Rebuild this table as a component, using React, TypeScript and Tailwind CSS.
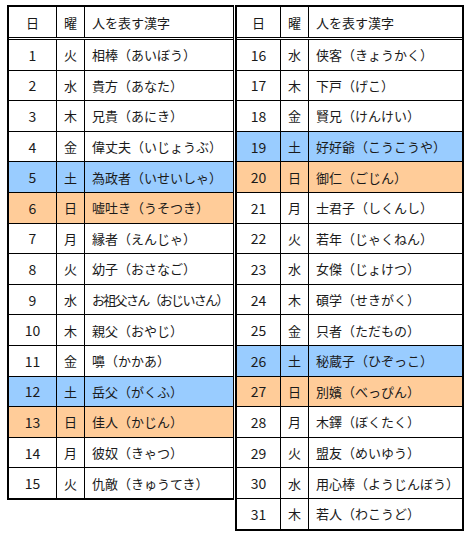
import React from "react"

type Row = { d: number; w: string; t: string; tight?: boolean }

const left: Row[] = [
  { d: 1, w: "火", t: "相棒（あいぼう）" },
  { d: 2, w: "水", t: "貴方（あなた）" },
  { d: 3, w: "木", t: "兄貴（あにき）" },
  { d: 4, w: "金", t: "偉丈夫（いじょうぶ）" },
  { d: 5, w: "土", t: "為政者（いせいしゃ）" },
  { d: 6, w: "日", t: "嘘吐き（うそつき）" },
  { d: 7, w: "月", t: "縁者（えんじゃ）" },
  { d: 8, w: "火", t: "幼子（おさなご）" },
  { d: 9, w: "水", t: "お祖父さん（おじいさん）", tight: true },
  { d: 10, w: "木", t: "親父（おやじ）" },
  { d: 11, w: "金", t: "嚊（かかあ）" },
  { d: 12, w: "土", t: "岳父（がくふ）" },
  { d: 13, w: "日", t: "佳人（かじん）" },
  { d: 14, w: "月", t: "彼奴（きゃつ）" },
  { d: 15, w: "火", t: "仇敵（きゅうてき）" },
]

const right: Row[] = [
  { d: 16, w: "水", t: "侠客（きょうかく）" },
  { d: 17, w: "木", t: "下戸（げこ）" },
  { d: 18, w: "金", t: "賢兄（けんけい）" },
  { d: 19, w: "土", t: "好好爺（こうこうや）" },
  { d: 20, w: "日", t: "御仁（ごじん）" },
  { d: 21, w: "月", t: "士君子（しくんし）" },
  { d: 22, w: "火", t: "若年（じゃくねん）" },
  { d: 23, w: "水", t: "女傑（じょけつ）" },
  { d: 24, w: "木", t: "碩学（せきがく）" },
  { d: 25, w: "金", t: "只者（ただもの）" },
  { d: 26, w: "土", t: "秘蔵子（ひぞっこ）" },
  { d: 27, w: "日", t: "別嬪（べっぴん）" },
  { d: 28, w: "月", t: "木鐸（ぼくたく）" },
  { d: 29, w: "火", t: "盟友（めいゆう）" },
  { d: 30, w: "水", t: "用心棒（ようじんぼう）" },
  { d: 31, w: "木", t: "若人（わこうど）" },
]

function rowBg(w: string) {
  if (w === "土") return "bg-[#99ccff]"
  if (w === "日") return "bg-[#ffcc99]"
  return "bg-white"
}

function KanjiTable({ rows, cols, outer }: { rows: Row[]; cols: string; outer: string }) {
  return (
    <div className={`border-black border-t-2 border-b-2 ${outer}`}>
      <div className={`grid ${cols} h-[33px] border-b-[3px] border-double border-black`}>
        <div className="flex items-center justify-center border-r border-black">日</div>
        <div className="flex items-center justify-center border-r border-black">曜</div>
        <div className="flex items-center pl-[7px]">人を表す漢字</div>
      </div>
      {rows.map((r, i) => (
        <div
          key={r.d}
          className={`grid ${cols} ${rowBg(r.w)} ${
            i < rows.length - 1 ? "h-[30.6px] border-b border-black" : "h-[29.6px]"
          }`}
        >
          <div className="flex items-center justify-center border-r border-black text-[14px]">{r.d}</div>
          <div className="flex items-center justify-center border-r border-black">{r.w}</div>
          <div
            className={`flex items-center pl-[7px] whitespace-nowrap overflow-hidden ${
              r.tight ? "tracking-[-1.7px]" : ""
            }`}
          >
            {r.t}
          </div>
        </div>
      ))}
    </div>
  )
}

export default function App() {
  return (
    <div className="w-[468px] h-[535px] bg-white pl-[7px] pt-[5px] text-[13px] text-[#1a1a1a] font-['Noto_Sans_CJK_JP','Noto_Sans',sans-serif] leading-none">
      <div className="flex items-start">
        <KanjiTable rows={left} cols="grid-cols-[48px_28px_148px]" outer="border-l-2 border-r w-[227px]" />
        <div className="ml-[1px]">
          <KanjiTable rows={right} cols="grid-cols-[44px_28px_153px]" outer="border-l-2 border-r-2 w-[229px]" />
        </div>
      </div>
    </div>
  )
}
